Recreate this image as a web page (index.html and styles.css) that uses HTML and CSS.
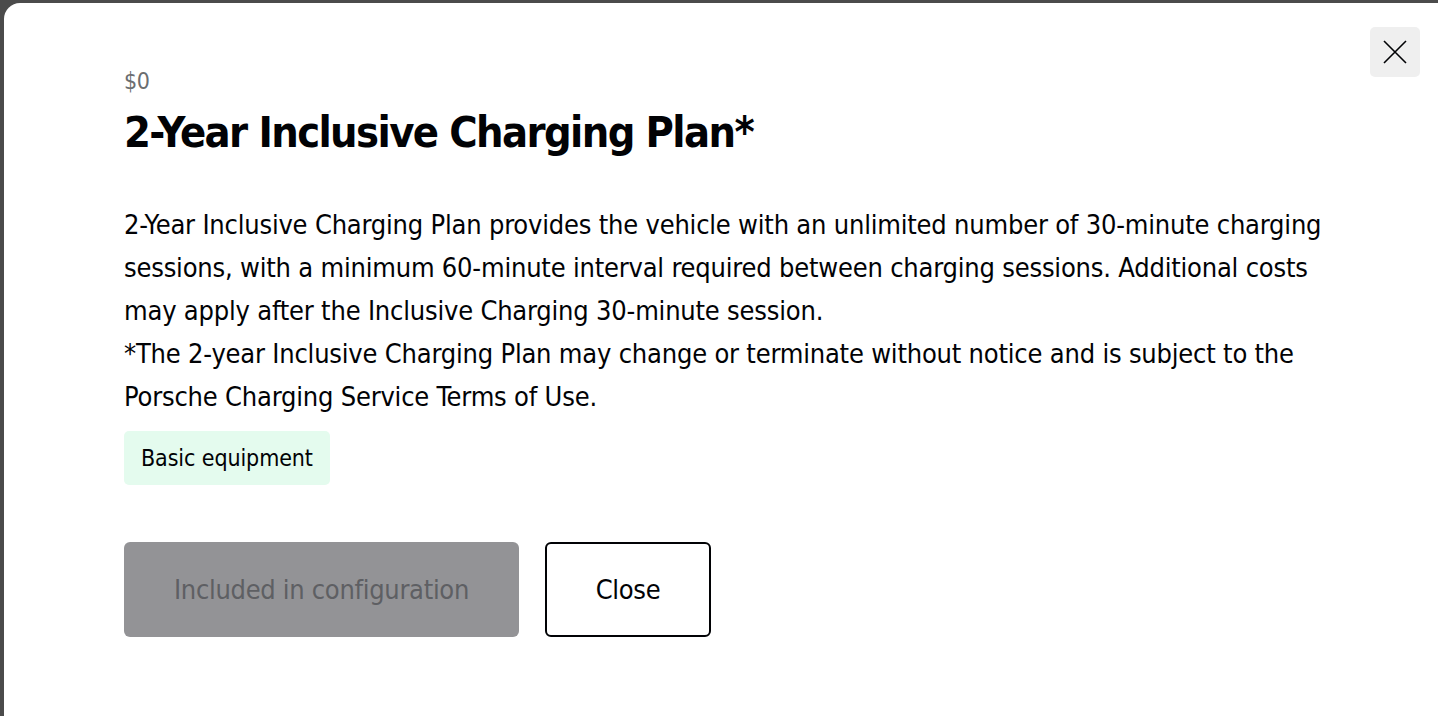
FILE: index.html
```html
<!DOCTYPE html>
<html lang="en">
<head>
  <meta charset="UTF-8">
  <meta name="viewport" content="width=device-width, initial-scale=1.0">
  <title>2-Year Inclusive Charging Plan</title>
  <link rel="stylesheet" href="styles.css">
</head>
<body>
  <div class="modal">
    <button class="dismiss" aria-label="Dismiss">
      <svg width="24" height="24" viewBox="0 0 24 24" fill="none" stroke="#010205" stroke-width="1.6">
        <path d="M1 1L23 23M23 1L1 23"/>
      </svg>
    </button>

    <div class="content">
      <p class="price">$0</p>
      <h2 class="title">2-Year Inclusive Charging Plan*</h2>

      <p class="description">2-Year Inclusive Charging Plan provides the vehicle with an unlimited number of 30-minute charging sessions, with a minimum 60-minute interval required between charging sessions. Additional costs may apply after the Inclusive Charging 30-minute session.<br>*The 2-year Inclusive Charging Plan may change or terminate without notice and is subject to the Porsche Charging Service Terms of Use.</p>

      <span class="tag">Basic equipment</span>

      <div class="actions">
        <button class="btn btn-disabled" disabled>Included in configuration</button>
        <button class="btn btn-outline">Close</button>
      </div>
    </div>
  </div>
</body>
</html>
```

FILE: styles.css
```css
html, body {
  height: 100%;
}

body {
  margin: 0;
  overflow: hidden;
  background: #4b4b4b;
  font-family: "DejaVu Sans Condensed", "Liberation Sans", sans-serif;
  color: #010205;
}

.modal {
  position: relative;
  box-sizing: border-box;
  margin: 3px 0 0 4px;
  height: 100%;
  background: #fff;
  border-top-left-radius: 16px;
}

.dismiss {
  position: absolute;
  top: 24px;
  right: 18px;
  width: 50px;
  height: 50px;
  display: flex;
  align-items: center;
  justify-content: center;
  padding: 0;
  border: none;
  border-radius: 5px;
  background: #efefef;
  cursor: pointer;
}

.content {
  padding: 62px 0 0 120px;
  display: flex;
  flex-direction: column;
  align-items: flex-start;
}

.price {
  margin: 0;
  font-size: 23px;
  line-height: 32px;
  color: #6b6d70;
  letter-spacing: -0.5px;
}

.title {
  margin: 7px 0 0;
  font-size: 43px;
  line-height: 56px;
  font-weight: 700;
  letter-spacing: -1.6px;
}

.description {
  margin: 43px 0 0;
  width: 1230px;
  font-size: 27px;
  line-height: 43px;
  letter-spacing: -0.2px;
}

.tag {
  margin-top: 13px;
  padding: 0 17px;
  height: 54px;
  display: flex;
  align-items: center;
  font-size: 23px;
  letter-spacing: -0.1px;
  background: #e4fbee;
  border-radius: 5px;
}

.actions {
  margin-top: 57px;
  display: flex;
  gap: 26px;
}

.btn {
  box-sizing: border-box;
  height: 95px;
  padding: 0;
  font-family: inherit;
  font-size: 27px;
  letter-spacing: -0.3px;
  border-radius: 6px;
  cursor: pointer;
}

.btn-disabled {
  width: 395px;
  border: none;
  background: #939396;
  color: #5e5f63;
  cursor: default;
}

.btn-outline {
  width: 166px;
  border: 2px solid #010205;
  background: #fff;
  color: #010205;
}
```
